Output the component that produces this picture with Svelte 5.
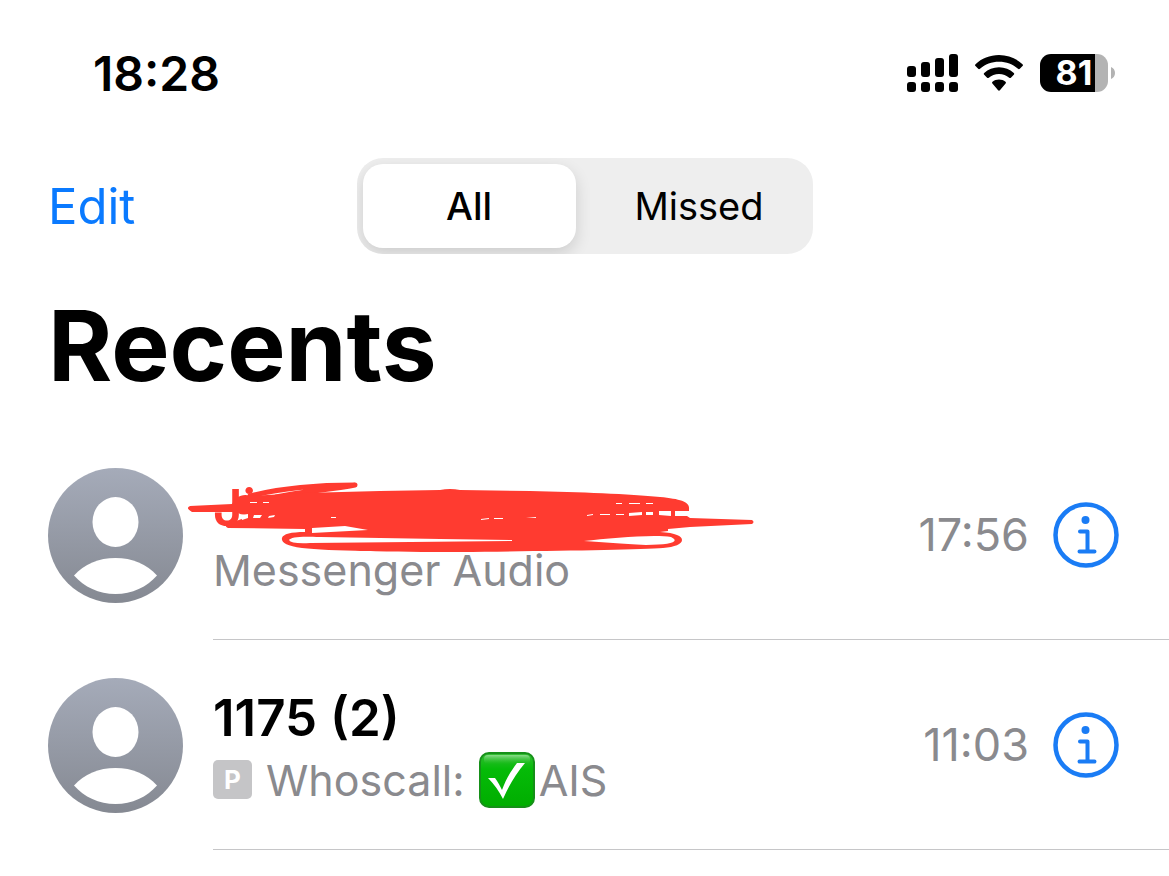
<script>
  let filter = $state("all");

  const calls = [
    { id: 1, name: "Ji", scribbled: true, source: "Messenger Audio", time: "17:56" },
    { id: 2, name: "1175 (2)", badge: "P", source: "Whoscall:", checked: "AIS", time: "11:03" }
  ];

  const bars = [
    { x: 0, y: 12 },
    { x: 14, y: 8 },
    { x: 28, y: 4 },
    { x: 42, y: 0 }
  ];
</script>

<div class="phone">
  <header class="status">
    <span class="clock">18:28</span>
    <div class="indicators">
      <svg class="signal" viewBox="0 0 51 38" aria-hidden="true">
        {#each bars as bar}
          <rect x={bar.x} y={bar.y} width="9" height={23 - bar.y} rx="3" />
          <rect x={bar.x} y="28" width="9" height="10" rx="3" />
        {/each}
      </svg>
      <svg class="wifi" viewBox="0 0 48 36" aria-hidden="true">
        <path d="M24 0C14.800 0 6.500 3.500 .5 9.200c-.6.600-.6 1.300 0 1.900l2.700 2.700c.5.500 1.200.5 1.800 0C10 9.200 16.700 6.700 24 6.700s14 2.500 19 7.100c.6.500 1.300.5 1.800 0l2.700-2.700c.6-.6.600-1.300 0-1.900C41.500 3.500 33.200 0 24 0z" />
        <path d="M24 12.300c-5.700 0-10.900 2.100-14.800 5.700-.6.600-.6 1.200 0 1.800l2.900 2.900c.5.500 1.100.5 1.700 0 2.700-2.300 6.200-3.700 10.200-3.700s7.500 1.400 10.200 3.700c.6.500 1.200.5 1.700 0l2.900-2.900c.6-.6.600-1.200 0-1.800-3.900-3.600-9.100-5.700-14.800-5.700z" />
        <path d="M24 24.600c-2.500 0-4.700.8-6.500 2.200-.6.500-.6 1.100-.1 1.600l5.700 6.900c.5.600 1.300.6 1.800 0l5.700-6.900c.5-.5.500-1.100-.1-1.600-1.800-1.400-4-2.200-6.500-2.200z" />
      </svg>
      <div class="battery">
        <div class="cell">81</div>
        <svg class="nub" viewBox="0 0 4 12" aria-hidden="true">
          <path d="M0 0c2.500 1 4 3.200 4 6s-1.500 5-4 6z" />
        </svg>
      </div>
    </div>
  </header>

  <nav class="toolbar">
    <button class="edit" type="button">Edit</button>
    <div class="segments">
      <button
        type="button"
        class:selected={filter === "all"}
        aria-pressed={filter === "all"}
        onclick={() => (filter = "all")}>All</button>
      <button
        type="button"
        class:selected={filter === "missed"}
        aria-pressed={filter === "missed"}
        onclick={() => (filter = "missed")}>Missed</button>
    </div>
  </nav>

  <h1>Recents</h1>

  <ul class="calls">
    {#each calls as call (call.id)}
      <li>
        <svg class="avatar" viewBox="0 0 135 135" aria-hidden="true">
          <defs>
            <linearGradient id="shade-{call.id}" x1="0" y1="0" x2="0" y2="1">
              <stop offset="0" stop-color="#a5abb9" />
              <stop offset="1" stop-color="#858992" />
            </linearGradient>
          </defs>
          <circle cx="67.500" cy="67.500" r="67.500" fill="url(#shade-{call.id})" />
          <ellipse cx="67.500" cy="54" rx="23" ry="25" fill="#fff" />
          <path d="M26 107.500C36 96 51 90 67.500 90S99 96 109 107.500C99 119 84 126 67.500 126S36 119 26 107.500z" fill="#fff" />
        </svg>
        <div class="body">
          <div class="text">
            <div class="name" class:scribbled={call.scribbled}>
              {call.name}
              {#if call.scribbled}
                <svg class="scribble" viewBox="187 477 570 76" aria-hidden="true">
                  <path class="stroke" d="M250 496C285 487 320 485 355 485C330 490 302 491 276 497" />
                  <path
                    d="M190 506L232 504C235 498 242 493 250 496L303 493L380 491L440 490Q450 488 460 490L530 491C580 492 630 494 660 497C681 499 690 502 689 509L689 511L675 511L675 516L687 516L690 518L752 520Q755 522 752 524L690 527L668 529L668 531L660 532C676 533 682 536 682 540C682 544 675 547 663 548C640 550 540 551 460 552C390 552 330 551 302 548C286 546 281 542 282 538C283 534 291 532 305 532L305 529L228 528Q221 525 236 521L250 516L240 514L237 512L192 512Q185 508 190 506z" />
                  <path class="gap" d="M312 528L345 526L368 530L312 533zM289 540C291 537 300 536 320 537L440 539L512 540L512 541L310 543Q291 544 289 540zM584 541C610 538 655 534 671 537C681 542 670 545 646 545C620 544 605 542 584 541z" />
                  <path class="gap" d="M241 515l7-1 0 4-6 2zM254 515l8 0-2 3-7 0zM269 516l6-1-1 2-6 1zM250 502l7 0 0 1-7 0zM263 502l6 0 0 1-6 0zM331 517l5 0 0 1-5 0zM481 519l8-1 0 1-8 1zM494 518l9 0 0 1-9 0zM526 518l10-1 0 1-10 0zM587 515l6-1 0 1-6 1zM600 514l10 0 0 1-10 0zM616 514l8 0 0 1-8 0zM629 513l13-1 0 3-13 1zM646 512l7 0 0 3-7 0zM659 511l12 0 0 5-12-1zM616 503l6 0 0 1-6 0zM629 503l11 0 0 1-11 0zM646 503l7 0 0 1-7 0z" />
                </svg>
              {/if}
            </div>
            <div class="source">
              {#if call.badge}<span class="badge">{call.badge}</span>{/if}
              <span>{call.source}</span>
              {#if call.checked}
                <span class="verified">
                  <svg class="check" viewBox="0 0 56 56" aria-hidden="true">
                    <defs>
                      <linearGradient id="green" x1="0" y1="0" x2="0" y2="1">
                        <stop offset="0" stop-color="#35bd35" />
                        <stop offset="0.300" stop-color="#05bb08" />
                        <stop offset="1" stop-color="#00ad00" />
                      </linearGradient>
                      <linearGradient id="gloss" x1="0" y1="0" x2="0" y2="1">
                        <stop offset="0" stop-color="#8bdc8b" />
                        <stop offset="1" stop-color="#35c335" stop-opacity="0" />
                      </linearGradient>
                    </defs>
                    <rect x="1" y="1" width="54" height="54" rx="9" fill="url(#green)" stroke="#169019" stroke-width="2" />
                    <rect x="5" y="3" width="46" height="9" rx="4" fill="url(#gloss)" />
                    <path d="M9 26h7c3 4 5 8 7 12C27 27 32 19 38 11h8C37 22 30 33 24 47 20 39 15 32 9 26z" fill="#fff" />
                  </svg>
                  {call.checked}
                </span>
              {/if}
            </div>
          </div>
          <time>{call.time}</time>
          <button class="info" type="button" aria-label="Info">
            <svg viewBox="0 0 66 66" aria-hidden="true">
              <circle cx="33" cy="33" r="30.500" stroke-width="4.500" />
              <circle class="dot" cx="32.500" cy="18" r="4" />
              <path d="M27 29.500h7.500v19M26.500 49.500h15" stroke-width="4" />
            </svg>
          </button>
        </div>
      </li>
    {/each}
  </ul>
</div>

<style>
  :global(body) {
    margin: 0;
    background: #fff;
  }
  .phone {
    font-family: Inter, "Liberation Sans", sans-serif;
    color: #000;
  }
  button {
    border: 0;
    padding: 0;
    background: none;
    font-family: inherit;
    color: inherit;
    cursor: pointer;
  }
  svg {
    display: block;
  }

  .status {
    display: flex;
    justify-content: space-between;
    align-items: center;
    height: 146px;
    padding: 0 54px 0 93px;
  }
  .clock {
    font-size: 48px;
    font-weight: 600;
  }
  .indicators {
    display: flex;
    align-items: center;
    gap: 17px;
  }
  .signal {
    width: 51px;
    height: 38px;
  }
  .wifi {
    width: 48px;
    height: 36px;
  }
  .battery {
    display: flex;
    align-items: center;
    gap: 3px;
  }
  .cell {
    width: 68px;
    height: 38px;
    border-radius: 11px;
    background: linear-gradient(to right, #000 55px, #b3b3b3 55px);
    color: #fff;
    font-size: 34px;
    font-weight: 700;
    line-height: 38px;
    text-align: center;
  }
  .nub {
    width: 4px;
    height: 12px;
    fill: #b3b3b3;
  }

  .toolbar {
    display: grid;
    grid-template-columns: 1fr auto 1fr;
    align-items: center;
    padding: 12px 48px 0;
  }
  .edit {
    justify-self: start;
    color: #0a7aff;
    font-size: 49px;
  }
  .segments {
    display: grid;
    grid-template-columns: 213px 215px;
    gap: 16px;
    padding: 6px;
    border-radius: 26px;
    background: #eee;
    overflow: hidden;
  }
  .segments button {
    height: 84px;
    border-radius: 20px;
    font-size: 38px;
  }
  .segments .selected {
    background: #fff;
    box-shadow: 0 6px 16px rgba(0, 0, 0, 0.14);
    font-weight: 500;
  }

  h1 {
    margin: 32px 48px 24px;
    font-size: 98px;
    font-weight: 700;
    line-height: 120px;
  }

  .calls {
    margin: 0;
    padding: 0;
    list-style: none;
  }
  li {
    display: flex;
    align-items: center;
    gap: 30px;
    padding-left: 48px;
  }
  .avatar {
    flex: none;
    width: 135px;
    height: 135px;
  }
  .body {
    display: flex;
    flex: 1;
    align-items: center;
    gap: 24px;
    height: 209px;
    padding-right: 50px;
    border-bottom: 1px solid #c6c6c8;
  }
  .text {
    flex: 1;
    padding-top: 8px;
    line-height: 62px;
  }
  .name {
    position: relative;
    font-size: 51px;
    font-weight: 600;
  }
  .scribbled {
    color: #ff3b30;
  }
  .scribble {
    position: absolute;
    top: 0;
    left: -26px;
    width: 570px;
    height: 76px;
    fill: #ff3b30;
  }
  .scribble .stroke {
    fill: none;
    stroke: #ff3b30;
    stroke-width: 5;
    stroke-linecap: round;
    stroke-linejoin: round;
  }
  .scribble .gap {
    fill: #fff;
  }
  .source {
    display: flex;
    align-items: center;
    gap: 14px;
    height: 62px;
    color: #8a8a8e;
    font-size: 43px;
  }
  .badge {
    width: 39px;
    height: 39px;
    border-radius: 5px;
    background: #c5c5c7;
    color: #fff;
    font-size: 26px;
    font-weight: 700;
    line-height: 39px;
    text-align: center;
  }
  .verified {
    display: flex;
    align-items: center;
    gap: 4px;
  }
  .check {
    width: 56px;
    height: 56px;
  }
  time {
    color: #8a8a8e;
    font-size: 45px;
  }
  .info {
    width: 66px;
    height: 66px;
  }
  .info svg {
    fill: none;
    stroke: #1a7cf5;
    stroke-linecap: round;
    stroke-linejoin: round;
  }
  .info .dot {
    fill: #1a7cf5;
    stroke: none;
  }
</style>
